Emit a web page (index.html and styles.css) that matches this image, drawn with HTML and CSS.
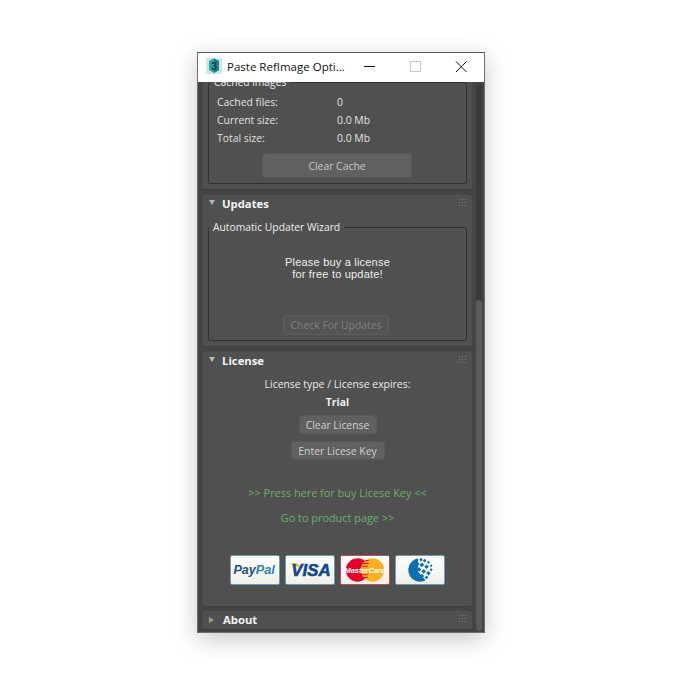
FILE: index.html
```html
<!DOCTYPE html>
<html lang="en">
<head>
<meta charset="utf-8">
<title>Paste RefImage Options</title>
<link rel="stylesheet" href="styles.css">
</head>
<body>
<div class="window">
  <header class="titlebar">
    <svg class="app-icon" width="16" height="16" viewBox="0 0 16 16"><rect width="16" height="16" fill="#cfe6e6"/><path d="M3 3l5-2.500 5 2.500v9l-5 3-5-3z" fill="#2ba5a8"/><path d="M8 .5l5 2.500v9l-5 3z" fill="#14858b"/><text class="app-icon-text" x="8" y="12" text-anchor="middle">3</text></svg>
    <span class="title-text">Paste RefImage Opti...</span>
    <div class="win-controls">
      <svg class="win-btn" width="46" height="29" viewBox="0 0 46 29"><path d="M18 13.500h11" stroke="#111" fill="none"/></svg>
      <svg class="win-btn" width="46" height="29" viewBox="0 0 46 29"><rect x="18.500" y="8.500" width="10" height="10" stroke="#c4c4c4" fill="none"/></svg>
      <svg class="win-btn" width="46" height="29" viewBox="0 0 46 29"><path d="M18 8.500l10.500 10.500M28.500 8.500L18 19" stroke="#111" fill="none"/></svg>
    </div>
  </header>
  <div class="viewport">
    <div class="rollouts">
      <section class="panel panel-cache">
        <fieldset class="group group-cache">
          <legend>Cached images</legend>
          <div class="stats">
            <span>Cached files:</span><span>0</span>
            <span>Current size:</span><span>0.0 Mb</span>
            <span>Total size:</span><span>0.0 Mb</span>
          </div>
          <button class="btn btn-cache">Clear Cache</button>
        </fieldset>
      </section>

      <section class="panel panel-updates">
        <div class="panel-head">
          <span class="tri tri-down"></span><h2>Updates</h2>
          <svg class="grip" width="7" height="7" viewBox="0 0 7 7"><path d="M0 0h1v1H0zM3 0h1v1H3zM6 0h1v1H6zM0 3h1v1H0zM3 3h1v1H3zM6 3h1v1H6zM0 6h1v1H0zM3 6h1v1H3zM6 6h1v1H6z" fill="#7c7c7c"/></svg>
        </div>
        <fieldset class="group group-updates">
          <legend>Automatic Updater Wizard</legend>
          <p class="notice">Please buy a license<br>for free to update!</p>
          <button class="btn btn-disabled" disabled>Check For Updates</button>
        </fieldset>
      </section>

      <section class="panel panel-license">
        <div class="panel-head">
          <span class="tri tri-down"></span><h2>License</h2>
          <svg class="grip" width="7" height="7" viewBox="0 0 7 7"><path d="M0 0h1v1H0zM3 0h1v1H3zM6 0h1v1H6zM0 3h1v1H0zM3 3h1v1H3zM6 3h1v1H6zM0 6h1v1H0zM3 6h1v1H3zM6 6h1v1H6z" fill="#7c7c7c"/></svg>
        </div>
        <div class="license-body">
          <p class="license-type">License type / License expires:</p>
          <p class="license-value">Trial</p>
          <button class="btn btn-clear">Clear License</button>
          <button class="btn btn-enter">Enter Licese Key</button>
          <a class="link link-buy">&gt;&gt; Press here for buy Licese Key &lt;&lt;</a>
          <a class="link link-product">Go to product page &gt;&gt;</a>
          <div class="pay-row">
            <svg class="pay-card card-blue" viewBox="0 0 50 30"><text class="paypal" x="24" y="19" text-anchor="middle"><tspan fill="#1f4f86">Pay</tspan><tspan fill="#2a84b8">Pal</tspan></text></svg>
            <svg class="pay-card card-blue" viewBox="0 0 50 30"><path d="M3 8h9l3.500 7C13 11.500 9 9.500 3 8z" fill="#efa92b"/><text class="visa" x="26" y="21.500" text-anchor="middle">VISA</text></svg>
            <svg class="pay-card card-red" viewBox="0 0 50 30"><circle cx="17" cy="15" r="12.500" fill="#e4002b"/><circle cx="33" cy="15" r="12.500" fill="#fbb01f"/><path d="M25 5h4M23 8h6M22 11h6M22 20h6M23 23h5" stroke="#e4002b" fill="none"/><text class="mc" x="25" y="18" text-anchor="middle">MasterCard</text></svg>
            <svg class="pay-card card-blue" viewBox="0 0 50 30"><circle cx="25" cy="15" r="12.500" fill="#0a70b6"/><path d="M23 2l16 2 1 14-8 9-9-10z" fill="#fff"/><g fill="#0a70b6"><path d="M26 2l2 2-2 2-2-2zM30 3l2 2-2 2-2-2zM34 5l1.700 1.700-1.700 1.700-1.700-1.700zM37 9l1.500 1.500-1.500 1.500-1.500-1.500zM22 6l2.500 2.500-2.500 2.500-2.500-2.500zM27 7l2.500 2.500-2.500 2.500-2.500-2.500zM32 9l2.500 2.500-2.500 2.500-2.500-2.500zM37 13l1.700 1.700-1.700 1.700-1.700-1.700zM24 12l2.500 2.500-2.500 2.500-2.500-2.500zM29 14l2.500 2.500-2.500 2.500-2.500-2.500zM34 16l2.500 2.500-2.500 2.500-2.500-2.500zM27 19l2.500 2.500-2.500 2.500-2.500-2.500zM32 21l2 2-2 2-2-2z"/></g></svg>
          </div>
        </div>
      </section>

      <section class="panel panel-about">
        <div class="panel-head panel-head-about">
          <span class="tri tri-right"></span><h2>About</h2>
          <svg class="grip" width="7" height="7" viewBox="0 0 7 7"><path d="M0 0h1v1H0zM3 0h1v1H3zM6 0h1v1H6zM0 3h1v1H0zM3 3h1v1H3zM6 3h1v1H6zM0 6h1v1H0zM3 6h1v1H3zM6 6h1v1H6z" fill="#7c7c7c"/></svg>
        </div>
      </section>
    </div>
    <div class="scrolltrack"><div class="scrollthumb"></div></div>
  </div>
</div>
</body>
</html>
```
FILE: styles.css
```css
* { box-sizing: border-box; }
html, body { margin: 0; height: 100%; background: #fff; }
body { padding: 52px 0 0 197px; font-family: "Open Sans", "Noto Sans", sans-serif; font-size: 10.400px; color: #e4e4e4; }

.window { width: 288px; height: 581px; border: 1px solid #6f6f6f; border-top-color: #555; background: #444; display: flex; flex-direction: column; box-shadow: 0 6px 22px rgba(0,0,0,.22); overflow: hidden; }

.titlebar { height: 29px; flex: none; background: #fff; display: flex; align-items: center; padding-left: 8px; color: #111; }
.app-icon { flex: none; margin-top: -3px; }
.app-icon-text { font: bold 10px "Liberation Sans", sans-serif; fill: #12383c; }
.title-text { margin-left: 5px; font-size: 11.500px; white-space: nowrap; flex: 1; min-width: 0; margin-top: -2px; }
.win-controls { display: flex; flex: none; }
.win-btn { display: block; }

.viewport { flex: 1; display: flex; overflow: hidden; padding-top: 1px; background: #444; }
.rollouts { width: 275px; padding-left: 4px; flex: none; }

.panel { width: 271px; background: #505050; border: 1px solid #474747; border-bottom-color: #3d3d3d; border-radius: 3px; }
.panel-cache { height: 149px; margin-top: -42px; margin-bottom: 4px; padding: 33px 5px 0; }
.panel-updates { height: 153px; margin-bottom: 4px; }
.panel-license { height: 256px; margin-bottom: 3px; }
.panel-about { height: 20px; }

.panel-head { height: 18px; display: flex; align-items: center; padding: 0 6px; }
.panel-head h2 { margin: 0 0 2px 7px; font-size: 11.300px; font-weight: 700; color: #f4f4f4; flex: 1; }
.tri { width: 0; height: 0; flex: none; }
.tri-down { border-left: 3.500px solid transparent; border-right: 3.500px solid transparent; border-top: 5px solid #b8b8b8; margin-bottom: 3px; }
.tri-right { border-top: 3.500px solid transparent; border-bottom: 3.500px solid transparent; border-left: 5px solid #9a9a9a; margin-right: 2px; }
.grip { flex: none; margin-bottom: 3px; }

.group { margin: 0; min-width: 0; border: 1px solid #333; border-radius: 2px; padding: 0; }
.group legend { padding: 0 4px 0 3px; margin-left: 1px; font-size: 10.300px; line-height: 14px; color: #eee; }
.group-cache { height: 109px; padding: 4px 0 0 8px; }
.group-cache legend { margin-left: -6px; }
.group-updates { margin: 7px 5px 0; height: 121px; }

.stats { display: grid; grid-template-columns: 120px 1fr; grid-auto-rows: 18px; align-items: center; color: #e2e2e2; }

.btn { display: block; font-family: inherit; font-size: 10.400px; border-radius: 3px; border: 1px solid #595959; background: #606060; color: #d0d0d0; padding: 0; margin: 0 auto; }
.btn-cache { width: 150px; height: 25px; margin: 6px 0 0 45px; color: #c8c8c8; }
.btn-disabled { width: 106px; height: 20px; margin: 35px 0 0 74px; background: #545454; border-color: #5d5d5d; color: #7f7f7f; }
.btn-clear { width: 78px; height: 19px; margin-top: 5px; }
.btn-enter { width: 94px; height: 19px; margin-top: 7px; }

.notice { margin: 22px 0 0; text-align: center; font: 11px/12px "Liberation Sans", sans-serif; letter-spacing: .2px; color: #eee; }

.license-body { text-align: center; }
.license-type { margin: 7px 0 0; line-height: 15px; color: #eaeaea; }
.license-value { margin: 3px 0 0; line-height: 15px; font-weight: 700; color: #f0f0f0; }
.link { display: block; color: #68b268; cursor: pointer; line-height: 15px; font-size: 10.900px; }
.link-buy { margin-top: 25px; }
.link-product { margin-top: 10px; }

.pay-row { display: flex; justify-content: center; gap: 5px; margin-top: 30px; padding-right: 1px; }
.pay-card { width: 50px; height: 30px; display: block; background: linear-gradient(#fff, #f0f0ea); border-radius: 2px; }
.card-blue { border: 1px solid #6d9cb5; }
.card-red { border: 1px solid #b8505a; }
.paypal { font: italic bold 13.500px "Liberation Sans", sans-serif; }
.visa { font: italic bold 18px "Liberation Sans", sans-serif; fill: #12468f; stroke: #12468f; stroke-width: .6px; }
.mc { font: italic bold 8px "Liberation Sans", sans-serif; fill: #fff; }

.scrolltrack { width: 6px; margin: 2px 0 1px 3px; background: #3a3a3a; border-radius: 3px; display: flex; flex-direction: column; justify-content: flex-end; flex: none; }
.scrollthumb { height: 331px; background: #5a5a5a; border-radius: 3px; }
```
